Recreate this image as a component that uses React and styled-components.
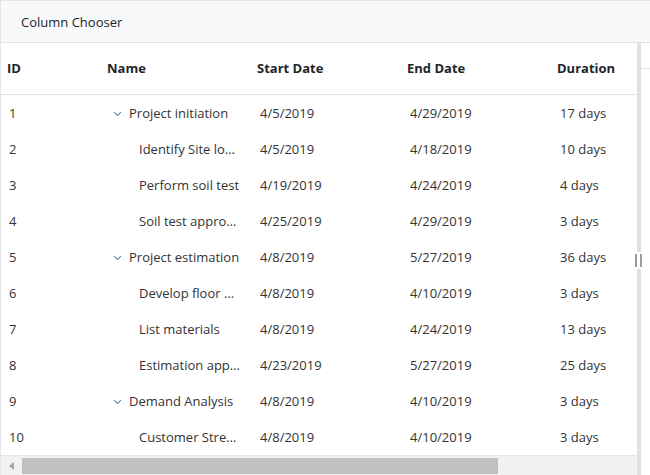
import React from "react";
import styled, { createGlobalStyle } from "styled-components";

const GlobalStyle = createGlobalStyle`
  html, body {
    margin: 0;
    padding: 0;
    background: #ffffff;
  }
  body {
    font-family: "Open Sans", "Noto Sans", sans-serif;
    color: #212529;
  }
`;

const COLS = "100px 150px 150px 150px 150px";

const tasks = [
  { id: 1, name: "Project initiation", start: "4/5/2019", end: "4/29/2019", duration: "17 days", parent: true },
  { id: 2, name: "Identify Site location", start: "4/5/2019", end: "4/18/2019", duration: "10 days" },
  { id: 3, name: "Perform soil test", start: "4/19/2019", end: "4/24/2019", duration: "4 days" },
  { id: 4, name: "Soil test approval", start: "4/25/2019", end: "4/29/2019", duration: "3 days" },
  { id: 5, name: "Project estimation", start: "4/8/2019", end: "5/27/2019", duration: "36 days", parent: true },
  { id: 6, name: "Develop floor plan for estimation", start: "4/8/2019", end: "4/10/2019", duration: "3 days" },
  { id: 7, name: "List materials", start: "4/8/2019", end: "4/24/2019", duration: "13 days" },
  { id: 8, name: "Estimation approval", start: "4/23/2019", end: "5/27/2019", duration: "25 days" },
  { id: 9, name: "Demand Analysis", start: "4/8/2019", end: "4/10/2019", duration: "3 days", parent: true },
  { id: 10, name: "Customer Strength", start: "4/8/2019", end: "4/10/2019", duration: "3 days" },
];

const Frame = styled.div`
  width: 650px;
  height: 475px;
  display: flex;
  flex-direction: column;
  border-top: 1px solid #e3e5e8;
  border-left: 1px solid #e3e5e8;
  box-sizing: border-box;
  overflow: hidden;
`;

const Toolbar = styled.div`
  height: 41px;
  flex: none;
  display: flex;
  align-items: center;
  padding-left: 20px;
  background: #f8f9fa;
  border-bottom: 1px solid #dee2e6;
  font-size: 13px;
  color: #212529;
`;

const Body = styled.div`
  flex: 1;
  display: flex;
  min-height: 0;
`;

const GridPane = styled.div`
  width: 636px;
  flex: none;
  display: flex;
  flex-direction: column;
  overflow: hidden;
`;

const HeaderRow = styled.div`
  display: grid;
  grid-template-columns: ${COLS};
  height: 51px;
  box-sizing: border-box;
  padding-bottom: 2px;
  flex: none;
  border-bottom: 1px solid #dee2e6;
  align-items: center;
  height: 52px;
`;

const HeaderCell = styled.div`
  padding-left: 6px;
  font-size: 13px;
  font-weight: 700;
  color: #212529;
  white-space: nowrap;
`;

const Rows = styled.div`
  flex: 1;
  border-bottom: 1px solid #e3e5e8;
`;

const Row = styled.div`
  display: grid;
  grid-template-columns: ${COLS};
  height: 36px;
  align-items: center;
`;

const Cell = styled.div`
  padding-left: 8px;
  font-size: 13px;
  color: #333;
  white-space: nowrap;
  overflow: hidden;
  text-overflow: ellipsis;
`;

const DateCell = styled(Cell)`
  padding-left: 9px;
`;

const NameCell = styled(Cell)`
  display: flex;
  align-items: center;
  padding-left: ${(p) => (p.$parent ? 12 : 38)}px;
  padding-right: 10px;
`;

const NameText = styled.span`
  overflow: hidden;
  text-overflow: ellipsis;
  white-space: nowrap;
`;

const Chevron = styled.svg`
  width: 9px;
  height: 6px;
  flex: none;
  margin-right: 7px;
  margin-top: 2px;
`;

const HScroll = styled.div`
  height: 20px;
  flex: none;
  display: flex;
  align-items: center;
  background: #f1f1f1;
`;

const ArrowBtn = styled.div`
  width: 21px;
  height: 20px;
  display: flex;
  align-items: center;
  justify-content: center;
`;

const Thumb = styled.div`
  width: 476px;
  height: 16px;
  background: #c1c1c1;
`;

const Splitter = styled.div`
  width: 4px;
  flex: none;
  position: relative;
  background: #dee2e6;
`;

const Grip = styled.div`
  position: absolute;
  top: 209px;
  left: -2px;
  width: 7px;
  height: 17px;
  background: #fff;
  display: flex;
  justify-content: space-between;
  align-items: center;
  &::before,
  &::after {
    content: "";
    width: 2px;
    height: 13px;
    background: #9a9ea3;
  }
`;

const ChartPane = styled.div`
  flex: 1;
  display: flex;
  flex-direction: column;
`;

const TimelineTier = styled.div`
  height: 25px;
  flex: none;
  border-bottom: 1px solid #dee2e6;
`;

const ChartSpace = styled.div`
  flex: 1;
`;

const ChevronIcon = () => (
  <Chevron viewBox="0 0 9 6">
    <path d="M1 1 L4.5 4.5 L8 1" fill="none" stroke="#6f8db8" strokeWidth="1.1" />
  </Chevron>
);

const App = () => {
  return (
    <>
      <GlobalStyle />
      <Frame>
        <Toolbar>Column Chooser</Toolbar>
        <Body>
          <GridPane>
            <HeaderRow>
              <HeaderCell>ID</HeaderCell>
              <HeaderCell>Name</HeaderCell>
              <HeaderCell>Start Date</HeaderCell>
              <HeaderCell>End Date</HeaderCell>
              <HeaderCell>Duration</HeaderCell>
            </HeaderRow>
            <Rows>
              {tasks.map((t) => (
                <Row key={t.id}>
                  <Cell>{t.id}</Cell>
                  <NameCell $parent={t.parent}>
                    {t.parent && <ChevronIcon />}
                    <NameText>{t.name}</NameText>
                  </NameCell>
                  <DateCell>{t.start}</DateCell>
                  <DateCell>{t.end}</DateCell>
                  <DateCell>{t.duration}</DateCell>
                </Row>
              ))}
            </Rows>
            <HScroll>
              <ArrowBtn>
                <svg width="5" height="8" viewBox="0 0 5 8">
                  <path d="M5 0 L0 4 L5 8 Z" fill="#a3a3a3" />
                </svg>
              </ArrowBtn>
              <Thumb />
            </HScroll>
          </GridPane>
          <Splitter>
            <Grip />
          </Splitter>
          <ChartPane>
            <TimelineTier />
            <ChartSpace />
          </ChartPane>
        </Body>
      </Frame>
    </>
  );
};

export default App;
